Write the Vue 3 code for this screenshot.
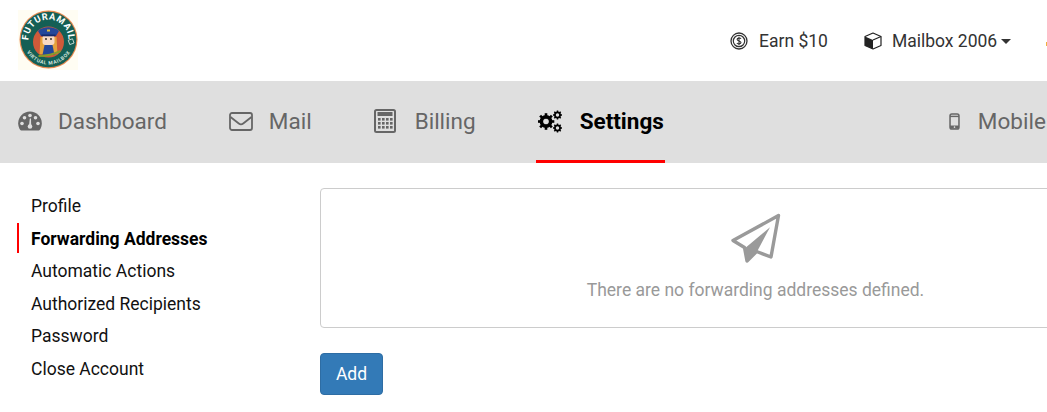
<script setup>
const sideItems = [
  { label: 'Profile' },
  { label: 'Forwarding Addresses', active: true },
  { label: 'Automatic Actions' },
  { label: 'Authorized Recipients' },
  { label: 'Password' },
  { label: 'Close Account' },
]
const gearTeeth = [0, 45, 90, 135]
</script>

<template>
  <div class="page">
    <header class="top">
      <div class="logo">
        <svg width="60" height="60" viewBox="0 0 60 60">
          <rect width="60" height="60" fill="#fffdf3" />
          <circle cx="30.500" cy="29.500" r="29" fill="#e8894f" />
          <circle cx="30.500" cy="29.500" r="27.800" fill="#145f55" />
          <circle cx="30.500" cy="32" r="15.500" fill="#cf5a3a" />
          <defs>
            <path id="arcTop" d="M12.600 38.500A20 20 0 1 1 48.400 38.500" />
            <path id="arcBottom" d="M6.500 37A25.200 25.200 0 0 0 54.500 37" />
          </defs>
          <text class="logo-top"><textPath href="#arcTop" startOffset="50%" text-anchor="middle">FUTURAMAIL</textPath></text>
          <text class="logo-bottom"><textPath href="#arcBottom" startOffset="50%" text-anchor="middle">VIRTUAL MAILBOX</textPath></text>
          <g transform="translate(1.500 1)">
            <path d="M20 43l1-17h16l1 17z" fill="#e6a23c" />
            <rect x="23" y="24" width="12" height="10" rx="3" fill="#f8d9c4" />
            <path d="M23 44l2-10h8l2 10z" fill="#24479a" />
            <path d="M18.500 20c5-5 16-5 21 0l-3 5H21.500z" fill="#24479a" />
            <rect x="22" y="23.500" width="14" height="1.800" fill="#14296b" />
            <rect x="27.500" y="18.500" width="3" height="2" fill="#e6c13c" />
            <circle cx="26.500" cy="28" r=".9" fill="#222" />
            <circle cx="31.500" cy="28" r=".9" fill="#222" />
            <path d="M19 45c8 0 16-2 22-5" stroke="#8a9a2a" stroke-width="2" fill="none" />
          </g>
          <rect x="51" y="29.500" width="4.500" height="4.500" fill="none" stroke="#d5e5df" stroke-width=".8" transform="rotate(-20 53 32)" />
        </svg>
      </div>
      <div class="top-links">
        <a class="top-link">
          <svg class="earn-icon" width="18" height="18" viewBox="0 0 18 18">
            <circle cx="9" cy="9" r="8" fill="none" stroke="#333" stroke-width="1.300" />
            <circle cx="9" cy="9" r="5.700" fill="none" stroke="#333" stroke-width="1.200" />
            <path d="M11 6.800C10.500 5.800 7.200 5.700 7.100 7.400 7 9.200 11 8.600 11 10.500c0 1.800-3.500 1.700-4.100.6M9 4.800v8.400" fill="none" stroke="#333" stroke-width="1.100" />
          </svg>
          <span>Earn $10</span>
        </a>
        <a class="top-link mailbox">
          <svg width="18" height="18" viewBox="0 0 18 18">
            <path d="M9 1l8 3.500v9L9 17l-8-3.500v-9z" fill="#fff" stroke="#222" stroke-width="1.200" stroke-linejoin="round" />
            <path d="M1 4.500L9 8v9l-8-3.500z" fill="#222" />
            <path d="M9 8l8-3.500" stroke="#222" stroke-width="1.200" />
          </svg>
          <span>Mailbox 2006</span>
          <i class="caret"></i>
        </a>
        <i class="edge-mark"></i>
      </div>
    </header>

    <nav class="nav">
      <a class="nav-item dash">
        <svg width="24" height="20" viewBox="0 0 24 20">
          <path fill-rule="evenodd" fill="#666" d="M12 .500C5.400.500.200 5.700.200 12.200c0 2.400.700 4.700 1.900 6.500.3.400.7.700 1.200.7h17.400c.5 0 .9-.3 1.200-.7 1.200-1.800 1.900-4.100 1.900-6.500C23.800 5.700 18.600.500 12 .500z" />
          <g fill="#dfdfdf">
            <circle cx="12" cy="4.500" r="1.800" />
            <circle cx="6.500" cy="6.800" r="1.800" />
            <circle cx="17.500" cy="6.800" r="1.800" />
            <circle cx="4" cy="12.500" r="1.800" />
            <circle cx="20" cy="12.500" r="1.800" />
            <circle cx="12" cy="15.500" r="2.300" />
            <path d="M11 14.500l.8-7h1.200l.2 7z" />
          </g>
        </svg>
        <span>Dashboard</span>
      </a>
      <a class="nav-item mail">
        <svg width="24" height="19" viewBox="0 0 24 19">
          <rect x="1" y="1" width="22" height="17" rx="2" fill="none" stroke="#666" stroke-width="1.800" />
          <path d="M1.500 5l8.300 6.500c1.300 1 3.100 1 4.400 0L22.500 5" fill="none" stroke="#666" stroke-width="1.800" />
        </svg>
        <span>Mail</span>
      </a>
      <a class="nav-item billing">
        <svg width="22" height="24" viewBox="0 0 22 24">
          <rect x="1" y="1" width="20" height="22" rx="1.500" fill="none" stroke="#666" stroke-width="2" />
          <rect x="3.500" y="3" width="15" height="4" fill="#666" />
          <g fill="#666">
            <rect x="4" y="9" width="2.600" height="2.600" /><rect x="8" y="9" width="2.600" height="2.600" /><rect x="12" y="9" width="2.600" height="2.600" /><rect x="16" y="9" width="2.600" height="2.600" />
            <rect x="4" y="13" width="2.600" height="2.600" /><rect x="8" y="13" width="2.600" height="2.600" /><rect x="12" y="13" width="2.600" height="2.600" /><rect x="16" y="13" width="2.600" height="2.600" />
            <rect x="4" y="17" width="2.600" height="2.600" /><rect x="8" y="17" width="2.600" height="2.600" /><rect x="12" y="17" width="2.600" height="2.600" /><rect x="16" y="17" width="2.600" height="2.600" />
          </g>
        </svg>
        <span>Billing</span>
      </a>
      <a class="nav-item settings">
        <svg width="24" height="23" viewBox="0 0 24 23">
          <g fill="none" stroke="#000">
            <circle cx="8" cy="11.500" r="4.800" stroke-width="3.200" />
            <g stroke-width="2.600">
              <path v-for="a in gearTeeth" :key="a" d="M8 3.200v16.600" :transform="`rotate(${a} 8 11.500)`" />
            </g>
            <circle cx="19.500" cy="5" r="2.600" stroke-width="1.700" />
            <g stroke-width="1.500">
              <path v-for="a in gearTeeth" :key="a" d="M19.500 .500v9" :transform="`rotate(${a} 19.500 5)`" />
            </g>
            <circle cx="19.500" cy="18" r="2.600" stroke-width="1.700" />
            <g stroke-width="1.500">
              <path v-for="a in gearTeeth" :key="a" d="M19.500 13.500v9" :transform="`rotate(${a} 19.500 18)`" />
            </g>
          </g>
          <circle cx="8" cy="11.500" r="2.800" fill="#dfdfdf" />
          <circle cx="19.500" cy="5" r="1.700" fill="#dfdfdf" />
          <circle cx="19.500" cy="18" r="1.700" fill="#dfdfdf" />
        </svg>
        <span>Settings</span>
      </a>
      <a class="nav-item mobile">
        <svg width="11" height="17" viewBox="0 0 12 19">
          <rect x="1" y="1" width="10" height="17" rx="2" fill="none" stroke="#666" stroke-width="1.700" />
          <rect x="1" y="3" width="10" height="1.600" fill="#666" />
          <rect x="1" y="14" width="10" height="3.500" fill="#666" />
          <circle cx="6" cy="15.800" r=".9" fill="#dfdfdf" />
        </svg>
        <span>Mobile</span>
      </a>
    </nav>

    <main class="content">
      <ul class="side">
        <li v-for="item in sideItems" :key="item.label" :class="{ active: item.active }">{{ item.label }}</li>
      </ul>
      <section class="panel-col">
        <div class="panel">
          <svg class="plane" width="52" height="52" viewBox="0 0 52 52">
            <path d="M48.500 3.500L3 28.500l11.500 7L17 49l9.500-9.500L41 45z" fill="none" stroke="#9a9a9a" stroke-width="3.400" stroke-linejoin="round" />
            <path d="M14 37L40 15.300 26.700 40.300 16.700 50.300z" fill="#9a9a9a" />
          </svg>
          <p>There are no forwarding addresses defined.</p>
        </div>
        <button class="add" type="button">Add</button>
      </section>
    </main>
  </div>
</template>

<style scoped>
.page {
  width: 1047px;
  height: 412px;
  overflow: hidden;
  background: #fff;
  font-family: Roboto, "Liberation Sans", sans-serif;
}
.top {
  height: 81px;
  display: flex;
  align-items: flex-start;
  justify-content: space-between;
}
.logo {
  margin: 10px 0 0 18px;
  width: 60px;
  height: 60px;
}
.logo svg { display: block; }
.logo-top {
  font: 700 9.200px Roboto, sans-serif;
  fill: #fff;
  letter-spacing: .7px;
}
.logo-bottom {
  font: 700 5px Roboto, sans-serif;
  fill: #d5e5df;
  letter-spacing: .6px;
}
.top-links {
  display: flex;
  align-items: center;
  height: 81px;
  width: 317px;
  flex: none;
}
.top-link {
  display: flex;
  align-items: center;
  font-size: 17.500px;
  color: #333;
  white-space: nowrap;
}
.top-link svg { margin-right: 11px; flex: none; }
.mailbox { margin-left: 36px; }
.mailbox svg { margin-right: 10px; }
.caret {
  display: block;
  margin-left: 4px;
  margin-top: 2px;
  border-top: 5px solid #333;
  border-left: 5px solid transparent;
  border-right: 5px solid transparent;
}
.edge-mark {
  display: block;
  margin-left: 35px;
  width: 3px;
  height: 4px;
  margin-top: 6px;
  background: #f0b040;
  flex: none;
}
.nav {
  height: 82px;
  background: #dfdfdf;
  display: flex;
  align-items: stretch;
  white-space: nowrap;
}
.nav-item {
  display: flex;
  align-items: center;
  font-size: 22.500px;
  color: #666;
  height: 82px;
  flex: none;
  padding-bottom: 2px;
  box-sizing: border-box;
}
.nav-item svg { flex: none; }
.dash { margin-left: 18px; }
.dash span { margin-left: 16px; }
.mail { margin-left: 62px; }
.mail span { margin-left: 16px; }
.billing { margin-left: 62px; }
.billing span { margin-left: 19px; }
.settings {
  margin-left: 60px;
  padding: 1px 1px 0 2px;
  color: #000;
  font-weight: 700;
  border-bottom: 3px solid #f00;
}
.settings span { margin-left: 18px; }
.mobile { margin-left: 284px; }
.mobile span { margin-left: 18px; }
.content {
  display: flex;
  align-items: flex-start;
}
.side {
  list-style: none;
  margin: 27px 0 0 17px;
  padding: 0;
  width: 303px;
  flex: none;
  box-sizing: border-box;
}
.side li {
  height: 32.500px;
  line-height: 32.500px;
  font-size: 17.500px;
  color: #111;
  padding-left: 14px;
  box-sizing: border-box;
  white-space: nowrap;
}
.side .active {
  font-weight: 700;
  color: #000;
  border-left: 2px solid #f00;
  padding-left: 12px;
  height: 30px;
  line-height: 32px;
  margin: .5px 0 2px;
}
.panel-col {
  flex: none;
  width: 871px;
  padding-top: 25px;
}
.panel {
  height: 140px;
  box-sizing: border-box;
  border: 1px solid #ccc;
  border-radius: 4px;
  display: flex;
  flex-direction: column;
  align-items: center;
  padding-top: 23px;
}
.plane { display: block; }
.panel p {
  margin: 14px 0 0;
  font-size: 17.500px;
  line-height: 24px;
  color: #999;
}
.add {
  display: block;
  margin-top: 25px;
  width: 63px;
  height: 42px;
  background: #337ab7;
  border: 1px solid #2e6da4;
  border-radius: 4px;
  color: #fff;
  font: 400 17.500px Roboto, sans-serif;
  padding: 0;
}
</style>

<style>
html, body { margin: 0; overflow: hidden; }
</style>
